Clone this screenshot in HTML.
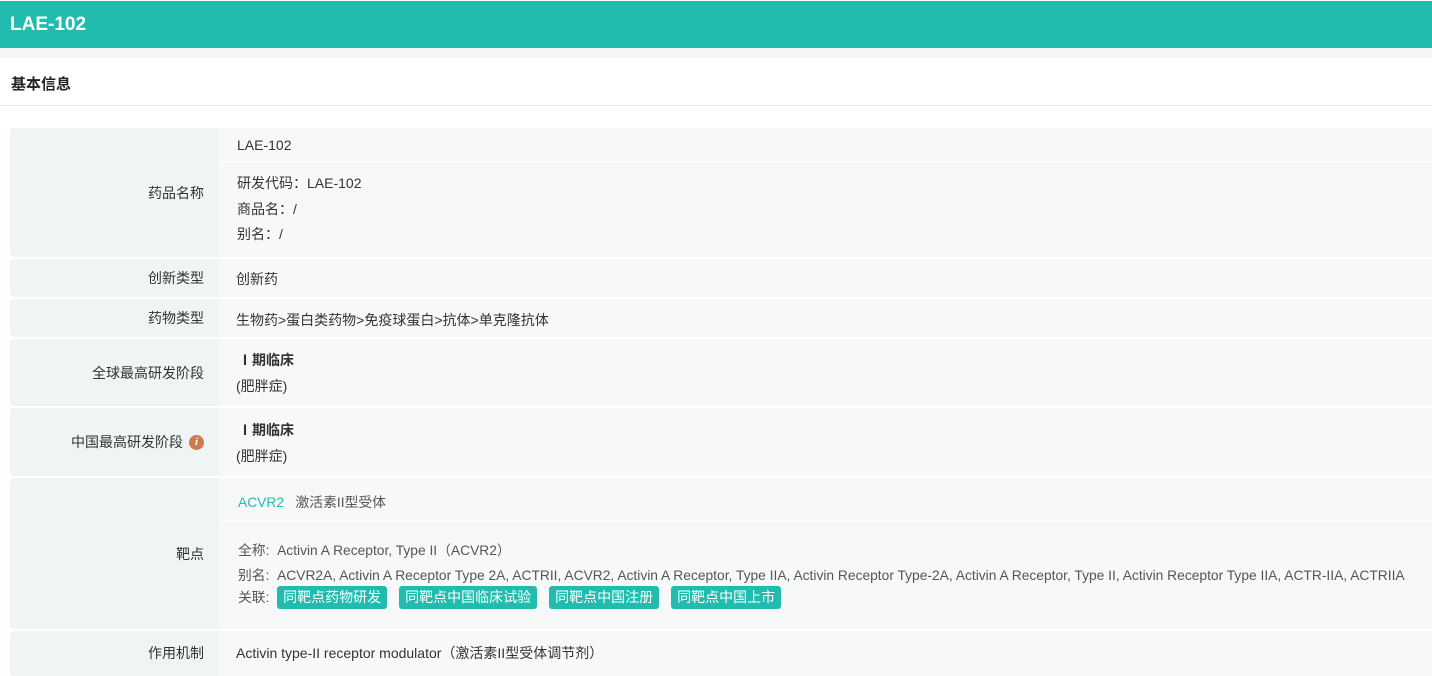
<!DOCTYPE html>
<html><head><meta charset="utf-8"><style>
*{margin:0;padding:0;box-sizing:border-box}
body{width:1432px;height:669px;overflow:hidden;background:#fff;font-family:"Liberation Sans","Noto Sans CJK SC",sans-serif;color:#333;font-size:14px;position:relative}
.hd{position:absolute;left:0;top:1px;width:1432px;height:47px;background:#20bcaf;color:#fff;font-weight:bold;font-size:19px;line-height:47px;padding-left:10px}
.gs{position:absolute;left:0;top:48px;width:1432px;height:10px;background:#f4f5f7}
.st{position:absolute;left:11px;top:73px;font-weight:bold;font-size:15px;color:#222}
.ln{position:absolute;left:0;top:105px;width:1432px;height:1px;background:#e6e6e6}
.r{position:absolute;left:10px;width:1422px}
.l{position:absolute;left:0;top:0;bottom:0;width:209px;background:#eef5f4;border-radius:4px 0 0 4px;text-align:right;padding-right:15px;display:flex;align-items:center;justify-content:flex-end}
.c{position:absolute;left:209px;right:0;top:0;bottom:0;background:#f7f9f9}
.t{position:absolute;left:18px;white-space:nowrap}
.g{color:#555;font-size:13.8px}
.tag{display:inline-block;background:#20bcaf;color:#fff;border-radius:3px;padding:0 6px;height:23px;line-height:23px;margin-right:12px;font-size:14px}
.i{display:inline-block;width:15px;height:15px;border-radius:50%;background:#d07a50;color:#fff;font-size:11px;font-style:italic;font-weight:bold;text-align:center;line-height:15px;margin-left:6px;font-family:"Liberation Serif",serif}
</style></head><body>
<div class="hd">LAE-102</div>
<div class="gs"></div>
<div class="st">基本信息</div>
<div class="ln"></div>

<div class="r" style="top:128px;height:129px"><div class="l">药品名称</div><div class="c">
<div class="t" style="top:9px">LAE-102</div>
<div style="position:absolute;left:0;right:0;top:33px;height:1px;background:#fff"></div>
<div class="t" style="top:45px">研发代码：LAE-102</div>
<div class="t" style="top:71px">商品名：/</div>
<div class="t" style="top:96px">别名：/</div>
</div></div>

<div class="r" style="top:259px;height:38px"><div class="l">创新类型</div><div class="c"><div class="t" style="top:10px;left:17px">创新药</div></div></div>
<div class="r" style="top:299px;height:38px"><div class="l">药物类型</div><div class="c"><div class="t" style="top:11px;left:17px">生物药&gt;蛋白类药物&gt;免疫球蛋白&gt;抗体&gt;单克隆抗体</div></div></div>
<div class="r" style="top:339px;height:67px"><div class="l">全球最高研发阶段</div><div class="c">
<div class="t" style="top:11px;left:19px;font-weight:bold">Ⅰ期临床</div>
<div class="t" style="top:37px;left:17px">(肥胖症)</div></div></div>
<div class="r" style="top:408px;height:68px"><div class="l">中国最高研发阶段<span class="i">i</span></div><div class="c">
<div class="t" style="top:12px;left:19px;font-weight:bold">Ⅰ期临床</div>
<div class="t" style="top:38px;left:17px">(肥胖症)</div></div></div>
<div class="r" style="top:478px;height:151px"><div class="l">靶点</div><div class="c">
<div class="t g" style="top:13px;left:19px"><span style="color:#20bcaf">ACVR2</span>&nbsp;&nbsp; 激活素II型受体</div>
<div style="position:absolute;left:0;right:0;top:42px;height:1px;background:#fff"></div>
<div class="t g" style="top:61px;left:19px">全称:&nbsp; Activin A Receptor, Type II（ACVR2）</div>
<div class="t g" style="top:86px;left:19px">别名:&nbsp; ACVR2A, Activin A Receptor Type 2A, ACTRII, ACVR2, Activin A Receptor, Type IIA, Activin Receptor Type-2A, Activin A Receptor, Type II, Activin Receptor Type IIA, ACTR-IIA, ACTRIIA</div>
<div class="t g" style="top:108px;left:19px">关联:&nbsp; <span class="tag">同靶点药物研发</span><span class="tag">同靶点中国临床试验</span><span class="tag">同靶点中国注册</span><span class="tag">同靶点中国上市</span></div>
</div></div>
<div class="r" style="top:631px;height:45px"><div class="l" style="align-items:flex-start;padding-top:12px">作用机制</div><div class="c"><div class="t" style="top:12px;left:17px">Activin type-II receptor modulator（激活素II型受体调节剂）</div></div></div>
</body></html>
